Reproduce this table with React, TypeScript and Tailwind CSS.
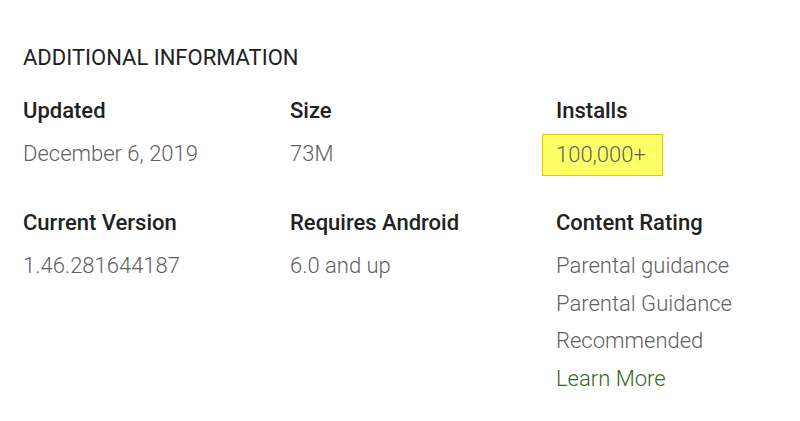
const font = { fontFamily: 'Roboto, "Noto Sans", sans-serif' };

type Item = { label: string; values: string[]; highlight?: boolean; link?: string };

const rows: Item[][] = [
  [
    { label: 'Updated', values: ['December 6, 2019'] },
    { label: 'Size', values: ['73M'] },
    { label: 'Installs', values: ['100,000+'], highlight: true },
  ],
  [
    { label: 'Current Version', values: ['1.46.281644187'] },
    { label: 'Requires Android', values: ['6.0 and up'] },
    {
      label: 'Content Rating',
      values: ['Parental guidance', 'Parental Guidance', 'Recommended'],
      link: 'Learn More',
    },
  ],
];

function Field({ item }: { item: Item }) {
  return (
    <div className="flex flex-col">
      <div className="text-[22px] leading-[28px] font-medium text-[#212121]">{item.label}</div>
      <div className="mt-[10px] flex flex-col items-start">
        {item.values.map((v) =>
          item.highlight ? (
            <span
              key={v}
              className="-ml-[14px] mt-[-1px] mb-[-3px] inline-block border border-[#f2c200] bg-[#ffff66] pl-[13px] pr-[16px] text-[22px] leading-[40px] font-light text-[#616161]"
            >
              {v}
            </span>
          ) : (
            <span key={v} className="text-[22px] leading-[37.5px] font-light text-[#616161]">
              {v}
            </span>
          ),
        )}
        {item.link && (
          <a href="#" className="text-[22px] leading-[37.5px] font-light text-[#33691e]">
            {item.link}
          </a>
        )}
      </div>
    </div>
  );
}

export default function App() {
  return (
    <div className="min-h-screen w-[800px] bg-white px-[23px] pt-[44px]" style={font}>
      <h2 className="text-[22px] leading-[28px] font-normal text-[#212121]">ADDITIONAL INFORMATION</h2>
      <div className="mt-[25px] flex flex-col gap-[36px]">
        {rows.map((row, i) => (
          <div key={i} className="grid grid-cols-[267px_266px_1fr]">
            {row.map((item) => (
              <Field key={item.label} item={item} />
            ))}
          </div>
        ))}
      </div>
    </div>
  );
}
